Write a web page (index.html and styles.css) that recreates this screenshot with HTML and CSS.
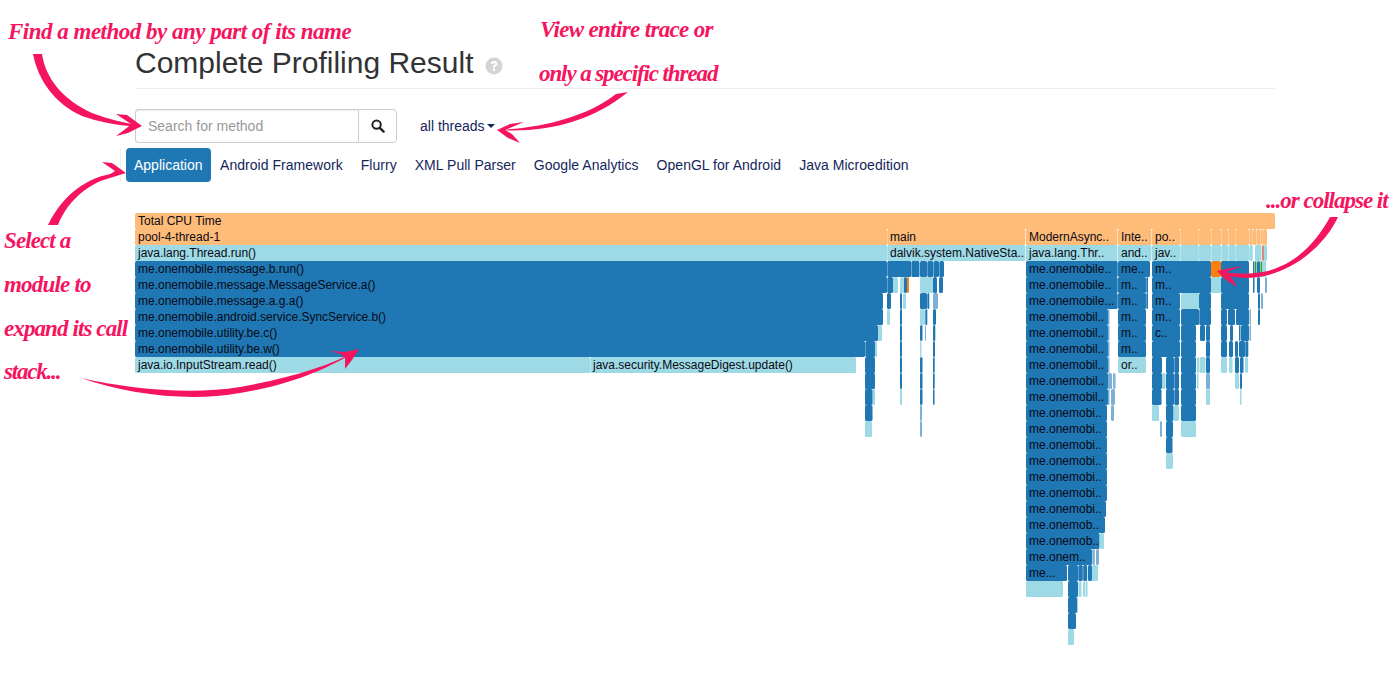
FILE: index.html
```html
<!DOCTYPE html>
<html lang="en">

<head>
    <meta charset="UTF-8">
    <title>Complete Profiling Result</title>
    <link rel="stylesheet" href="styles.css">
</head>

<body>
    <div class="page">
        <div class="page-header">
            <h1>Complete Profiling Result</h1>
            <svg class="help-icon" viewBox="0 0 18 18">
                <circle cx="9" cy="9" r="8.5" fill="#d4d4d4" />
                <path d="M5.8 6.8C6 4.9 7.4 4 9.2 4c1.9 0 3.3 1.1 3.3 2.8 0 1.3-.8 1.9-1.6 2.4-.7.4-.9.7-.9 1.3H7.9c0-1.3.4-1.9 1.3-2.4.7-.4 1-.7 1-1.2 0-.6-.5-1-1.1-1-.7 0-1.1.4-1.3 1.2z" fill="#fff" />
                <rect x="7.9" y="11.5" width="2.2" height="2.4" fill="#fff" />
            </svg>
        </div>

        <div class="toolbar">
            <div class="search-group">
                <input type="text" class="search-input" placeholder="Search for method">
                <button class="search-button" type="button">
                    <svg class="search-icon" viewBox="0 0 14 14">
                        <circle cx="5.6" cy="5.6" r="4.2" fill="none" stroke="#222" stroke-width="2" />
                        <path d="M8.8 8.8l3.8 3.8" stroke="#222" stroke-width="2.4" stroke-linecap="round" />
                    </svg>
                </button>
            </div>
            <a class="thread-select" href="#">all threads<span class="caret"></span></a>
        </div>

        <ul class="modules">
            <li class="active"><a href="#">Application</a></li>
            <li><a href="#">Android Framework</a></li>
            <li><a href="#">Flurry</a></li>
            <li><a href="#">XML Pull Parser</a></li>
            <li><a href="#">Google Analytics</a></li>
            <li><a href="#">OpenGL for Android</a></li>
            <li><a href="#">Java Microedition</a></li>
        </ul>

        <!-- viewBox uses page coordinates so the frames are easy to read off -->
        <svg class="flame" viewBox="135 213 1140 440">
            <g class="orange">
                <rect x="135" y="213" width="1140" />
                <rect x="135" y="229" width="752" />
                <rect x="887.3" y="229" width="138" />
                <rect x="1025.8" y="229" width="91.7" />
                <rect x="1118" y="229" width="33.5" />
                <rect x="1152" y="229" width="28" />
                <rect x="1180.3" y="229" width="18.5" />
                <rect x="1199" y="229" width="12" />
                <rect x="1211.3" y="229" width="9.7" />
                <rect x="1221.3" y="229" width="6.7" />
                <rect x="1228.3" y="229" width="7.5" />
                <rect x="1236" y="229" width="13" />
                <rect x="1249.3" y="229" width="3.5" />
                <rect x="1253" y="229" width="3.7" />
                <rect x="1257" y="229" width="3" />
                <rect x="1260.3" y="229" width="2.5" />
                <rect x="1263" y="229" width="4" />
            </g>
            <g class="light">
                <rect x="135" y="245" width="752" />
                <rect x="887.3" y="245" width="138" />
                <rect x="1025.8" y="245" width="91.7" />
                <rect x="1118" y="245" width="33.5" />
                <rect x="1152" y="245" width="28" />
                <rect x="1180.3" y="245" width="18.5" />
                <rect x="1199" y="245" width="12" />
                <rect x="1211.3" y="245" width="9.7" />
                <rect x="1221.3" y="245" width="6.7" />
                <rect x="1228.3" y="245" width="7.5" />
                <rect x="1236" y="245" width="13" />
                <rect x="1249.3" y="245" width="3.5" />
                <rect x="1255" y="245" width="6.5" />
                <rect x="1264" y="245" width="3" />
                <rect x="1262" y="261" width="4" />
                <rect x="893" y="277" width="5" />
                <rect x="900" y="277" width="4" />
                <rect x="920" y="277" width="13" />
                <rect x="1211" y="277" width="10" />
                <rect x="903" y="293" width="3" />
                <rect x="1181" y="293" width="18" />
                <rect x="887" y="309" width="3" />
                <rect x="920" y="309" width="5" />
                <rect x="878" y="325" width="4" />
                <rect x="875" y="341" width="2" />
                <rect x="135" y="357" width="455" />
                <rect x="590.3" y="357" width="265.7" />
                <rect x="1118" y="357" width="28" />
                <rect x="1197" y="357" width="2" />
                <rect x="1199.5" y="357" width="6" />
                <rect x="1221" y="357" width="6" />
                <rect x="1229" y="357" width="3.5" />
                <rect x="1245" y="357" width="3" />
                <rect x="920" y="341" width="1.5" />
                <rect x="1162" y="373" width="3.5" />
                <rect x="1197" y="373" width="1.5" />
                <rect x="1235" y="373" width="4" />
                <rect x="872.5" y="389" width="2.5" />
                <rect x="900" y="389" width="2" />
                <rect x="1206" y="389" width="4" />
                <rect x="1240" y="389" width="1.5" />
                <rect x="1152" y="405" width="7" />
                <rect x="1174" y="405" width="5" />
                <rect x="865" y="421" width="7" />
                <rect x="1181" y="421" width="15" />
                <rect x="1166" y="453" width="7" />
                <rect x="1100" y="533" width="4" />
                <rect x="1092" y="565" width="6" />
                <rect x="1026" y="581" width="37" />
                <rect x="1078.5" y="581" width="3" />
                <rect x="1083" y="581" width="2.5" />
                <rect x="1086" y="581" width="1.5" />
                <rect x="1077" y="597" width="1" />
                <rect x="1068" y="629" width="6" />
            </g>
            <g class="blue">
                <rect x="135" y="261" width="752" />
                <rect x="887.3" y="261" width="24" />
                <rect x="911.5" y="261" width="8" />
                <rect x="920" y="261" width="7" />
                <rect x="927.3" y="261" width="6" />
                <rect x="933.5" y="261" width="5.5" />
                <rect x="939.3" y="261" width="4.7" />
                <rect x="1026" y="261" width="91.7" />
                <rect x="1118" y="261" width="32" />
                <rect x="1152" y="261" width="59" />
                <rect x="1221" y="261" width="28" />
                <rect x="1253" y="261" width="1.5" />
                <rect x="1257" y="261" width="3" />

                <rect x="135" y="277" width="752" />
                <rect x="887.3" y="277" width="5.7" />
                <rect x="904" y="277" width="3" />
                <rect x="933" y="277" width="4" />
                <rect x="939" y="277" width="4" />
                <rect x="1026" y="277" width="91.7" />
                <rect x="1118" y="277" width="28" />
                <rect x="1146.3" y="277" width="1.7" />
                <rect x="1152" y="277" width="59" />
                <rect x="1221" y="277" width="28" />
                <rect x="1253" y="277" width="1.5" />
                <rect x="1257" y="277" width="3" />

                <rect x="135" y="293" width="748" />
                <rect x="887" y="293" width="4" />
                <rect x="900" y="293" width="2" />
                <rect x="920" y="293" width="7" />
                <rect x="927.3" y="293" width="2" />
                <rect x="1026" y="293" width="91.7" />
                <rect x="1118" y="293" width="28" />
                <rect x="1146.3" y="293" width="1.7" />
                <rect x="1152" y="293" width="28" />
                <rect x="1199" y="293" width="12" />
                <rect x="1221" y="293" width="28" />
                <rect x="1258" y="293" width="2" />

                <rect x="135" y="309" width="748" />
                <rect x="900" y="309" width="2" />
                <rect x="925.3" y="309" width="2" />
                <rect x="933" y="309" width="3" />
                <rect x="1026" y="309" width="82" />
                <rect x="1118" y="309" width="28" />
                <rect x="1152" y="309" width="28" />
                <rect x="1181" y="309" width="18" />
                <rect x="1199.3" y="309" width="11.7" />
                <rect x="1221" y="309" width="6" />
                <rect x="1228" y="309" width="7" />
                <rect x="1236" y="309" width="13" />
                <rect x="1258" y="309" width="2" />

                <rect x="135" y="325" width="743" />
                <rect x="900" y="325" width="2" />
                <rect x="920" y="325" width="2.5" />
                <rect x="933" y="325" width="2.3" />
                <rect x="1026" y="325" width="82" />
                <rect x="1118" y="325" width="28" />
                <rect x="1152" y="325" width="28" />
                <rect x="1181" y="325" width="15" />
                <rect x="1200" y="325" width="5" />
                <rect x="1206" y="325" width="4" />
                <rect x="1221" y="325" width="6" />
                <rect x="1230" y="325" width="3" />
                <rect x="1239" y="325" width="1.5" />
                <rect x="1241" y="325" width="8" />

                <rect x="135" y="341" width="730" />
                <rect x="865.3" y="341" width="9.7" />
                <rect x="900" y="341" width="2" />
                <rect x="933" y="341" width="2" />
                <rect x="1026" y="341" width="82" />
                <rect x="1118" y="341" width="28" />
                <rect x="1152" y="341" width="28" />
                <rect x="1181" y="341" width="15" />
                <rect x="1206" y="341" width="4" />
                <rect x="1221" y="341" width="6" />
                <rect x="1229" y="341" width="4" />
                <rect x="1235" y="341" width="3" />
                <rect x="1239" y="341" width="6" />
                <rect x="1245.3" y="341" width="3" />

                <rect x="865" y="357" width="10" />
                <rect x="900" y="357" width="2" />
                <rect x="920" y="357" width="2.5" />
                <rect x="933" y="357" width="1.7" />
                <rect x="1026" y="357" width="82" />
                <rect x="1152" y="357" width="10" />
                <rect x="1166" y="357" width="8" />
                <rect x="1174.3" y="357" width="4.7" />
                <rect x="1181" y="357" width="15" />
                <rect x="1206" y="357" width="4" />
                <rect x="1235" y="357" width="4" />
                <rect x="1240" y="357" width="3.5" />

                <rect x="865" y="373" width="10" />
                <rect x="900" y="373" width="2" />
                <rect x="920" y="373" width="2.5" />
                <rect x="933" y="373" width="1.7" />
                <rect x="1026" y="373" width="82" />
                <rect x="1152" y="373" width="10" />
                <rect x="1166" y="373" width="8" />
                <rect x="1174.3" y="373" width="4.7" />
                <rect x="1181" y="373" width="15" />
                <rect x="1240" y="373" width="2" />

                <rect x="865" y="389" width="7.5" />
                <rect x="920" y="389" width="2.5" />
                <rect x="933" y="389" width="1.5" />
                <rect x="1026" y="389" width="82" />
                <rect x="1152" y="389" width="9.5" />
                <rect x="1166" y="389" width="8" />
                <rect x="1174.3" y="389" width="4.7" />
                <rect x="1181" y="389" width="15" />

                <rect x="865" y="405" width="7.5" />
                <rect x="1026" y="405" width="81" />
                <rect x="1166" y="405" width="7.5" />
                <rect x="1181" y="405" width="15" />

                <rect x="1026" y="421" width="81" />
                <rect x="1166" y="421" width="7" />
                <rect x="1026" y="437" width="81" />
                <rect x="1166" y="437" width="6.5" />
                <rect x="1026" y="453" width="81" />
                <rect x="1026" y="469" width="81" />
                <rect x="1026" y="485" width="81" />
                <rect x="1026" y="501" width="80" />
                <rect x="1026" y="517" width="79" />
                <rect x="1026" y="533" width="73.5" />
                <rect x="1026" y="549" width="66" />

                <rect x="1026" y="565" width="41" />
                <rect x="1068" y="565" width="10" />
                <rect x="1078.3" y="565" width="4.5" />
                <rect x="1083.2" y="565" width="4" />
                <rect x="1088" y="565" width="4" />
                <rect x="1068" y="581" width="10" />
                <rect x="1068" y="597" width="9" />
                <rect x="1068" y="613" width="8" />
            </g>
            <g class="faded">
                <rect x="1265" y="277" width="2" />
                <rect x="1261" y="293" width="2" />
                <rect x="933" y="293" width="5" />
                <rect x="925" y="325" width="1" />
                <rect x="1108" y="309" width="1.5" />
                <rect x="1108" y="325" width="1.5" />
                <rect x="1108" y="341" width="1.5" />
                <rect x="1108" y="357" width="1.5" />
                <rect x="1108" y="373" width="4" />
                <rect x="1113" y="373" width="2.5" />
                <rect x="1108" y="389" width="1.5" />
                <rect x="1111" y="389" width="4" />
                <rect x="1111" y="405" width="3" />
                <rect x="920" y="405" width="2" />
                <rect x="920" y="421" width="2" />
                <rect x="1160" y="421" width="2" />
                <rect x="1206" y="373" width="4" />
                <rect x="1249.5" y="309" width="1.5" />
                <rect x="1249.5" y="325" width="1.5" />
                <rect x="1092.3" y="549" width="2.5" />
                <rect x="1096" y="549" width="3" />
            </g>
            <g class="hot">
                <rect x="1211" y="261" width="10" />
                <rect x="907" y="277" width="2" />
            </g>
            <g class="green">
                <rect x="1255" y="261" width="1.5" />
                <rect x="1260.5" y="261" width="1.5" />
            </g>
            <g class="red">
                <rect x="1262" y="245" width="2" />
            </g>
            <g class="labels">
                <text x="138" y="225">Total CPU Time</text>
                <text x="138" y="241">pool-4-thread-1</text>
                <text x="890" y="241">main</text>
                <text x="1029" y="241">ModernAsync..</text>
                <text x="1121" y="241">Inte..</text>
                <text x="1155" y="241">po..</text>
                <text x="138" y="257">java.lang.Thread.run()</text>
                <text x="890" y="257">dalvik.system.NativeSta..</text>
                <text x="1029" y="257">java.lang.Thr..</text>
                <text x="1121" y="257">and..</text>
                <text x="1155" y="257">jav..</text>
                <text x="138" y="273">me.onemobile.message.b.run()</text>
                <text x="1029" y="273">me.onemobile..</text>
                <text x="1121" y="273">me..</text>
                <text x="1155" y="273">m..</text>
                <text x="138" y="289">me.onemobile.message.MessageService.a()</text>
                <text x="1029" y="289">me.onemobile..</text>
                <text x="1121" y="289">m..</text>
                <text x="1155" y="289">m..</text>
                <text x="138" y="305">me.onemobile.message.a.g.a()</text>
                <text x="1029" y="305">me.onemobile...</text>
                <text x="1121" y="305">m..</text>
                <text x="1155" y="305">m..</text>
                <text x="138" y="321">me.onemobile.android.service.SyncService.b()</text>
                <text x="1029" y="321">me.onemobil..</text>
                <text x="1121" y="321">m..</text>
                <text x="1155" y="321">m..</text>
                <text x="138" y="337">me.onemobile.utility.be.c()</text>
                <text x="1029" y="337">me.onemobil..</text>
                <text x="1121" y="337">m..</text>
                <text x="1155" y="337">c..</text>
                <text x="138" y="353">me.onemobile.utility.be.w()</text>
                <text x="1029" y="353">me.onemobil..</text>
                <text x="1121" y="353">m..</text>
                <text x="138" y="369">java.io.InputStream.read()</text>
                <text x="593" y="369">java.security.MessageDigest.update()</text>
                <text x="1029" y="369">me.onemobil..</text>
                <text x="1121" y="369">or..</text>
                <text x="1029" y="385">me.onemobil..</text>
                <text x="1029" y="401">me.onemobil..</text>
                <text x="1029" y="417">me.onemobi..</text>
                <text x="1029" y="433">me.onemobi..</text>
                <text x="1029" y="449">me.onemobi..</text>
                <text x="1029" y="465">me.onemobi..</text>
                <text x="1029" y="481">me.onemobi..</text>
                <text x="1029" y="497">me.onemobi..</text>
                <text x="1029" y="513">me.onemobi..</text>
                <text x="1029" y="529">me.onemob..</text>
                <text x="1029" y="545">me.onemob..</text>
                <text x="1029" y="561">me.onem..</text>
                <text x="1029" y="577">me...</text>
            </g>
        </svg>
    </div>

    <!-- hand drawn callouts, these sit on top of the page -->
    <svg class="arrows" viewBox="0 0 1400 700">
        <path d="M33 54L42 54C46 80 64 100 92 113C108 119 125 123 142 126C120 127 100 122 82 116C55 104 38 80 33 54Z" />
        <path d="M116 114L127 115L142 126L128 133L116 136L128 127L131 124Z" />
        <path d="M628 92L616 94C585 118 540 128 498 130C545 133 592 122 628 92Z" />
        <path d="M524 122L510 124L497 130L508 138L520 143L512 134L505 130Z" />
        <path d="M48 225L58 225C68 200 90 180 125 173C95 172 65 190 48 225Z" />
        <path d="M102 162L112 163L126 173L110 178L97 182L112 173L115 171Z" />
        <path d="M81 378C130 395 190 402 240 393C290 385 330 368 358 350C330 366 290 378 240 387C190 395 130 389 81 378Z" />
        <path d="M330 351L345 352L359 349L352 360L345 369L345 358L341 354Z" />
        <path d="M1330 217L1338 217C1325 245 1290 278 1245 278C1235 278 1225 275 1217 271C1235 274 1245 274 1255 273C1290 270 1315 245 1330 217Z" />
        <path d="M1243 266L1230 268L1217 271L1226 280L1237 287L1232 278L1226 272Z" />
    </svg>

    <span class="note note-find">Find a method by any part of its name</span>
    <span class="note note-view">View entire trace or</span>
    <span class="note note-only">only a specific thread</span>
    <span class="note note-collapse">...or collapse it</span>
    <span class="note note-select">Select a</span>
    <span class="note note-module">module to</span>
    <span class="note note-expand">expand its call</span>
    <span class="note note-stack">stack...</span>
</body>

</html>
```

FILE: styles.css
```css
body {
    font-family: "Liberation Sans", Arial, sans-serif;
    font-size: 14px;
    color: #333;
    background-color: #fff;
    margin: 0;
}

a {
    color: #14265c;
    text-decoration: none;
}

.page {
    width: 1140px;
    margin-left: 135px;
    padding-top: 46px;
}

.page-header {
    display: flex;
    align-items: center;
    gap: 12px;
    padding-bottom: 9px;
    border-bottom: 1px solid #eee;
    margin-bottom: 20px;
}

.page-header h1 {
    font-size: 30px;
    font-weight: 400;
    line-height: 33px;
    margin: 0;
}

.help-icon {
    width: 18px;
    height: 18px;
    margin-top: 6px;
}

.toolbar {
    display: flex;
    align-items: center;
    gap: 23px;
    margin-bottom: 5px;
}

.search-group {
    display: flex;
    width: 262px;
    height: 34px;
}

.search-input {
    flex: 1;
    min-width: 0;
    padding: 6px 12px;
    border: 1px solid #ccc;
    border-right: none;
    border-radius: 4px 0 0 4px;
    box-sizing: border-box;
    font-family: inherit;
    font-size: 14px;
    box-shadow: inset 0 1px 1px rgba(0, 0, 0, 0.075);
}

.search-input::placeholder {
    color: #999;
}

.search-button {
    display: flex;
    align-items: center;
    justify-content: center;
    width: 39px;
    padding: 0;
    background-color: #fff;
    border: 1px solid #ccc;
    border-radius: 0 4px 4px 0;
}

.search-icon {
    width: 14px;
    height: 14px;
}

.thread-select {
    display: flex;
    align-items: center;
}

.caret {
    width: 0;
    height: 0;
    margin-left: 2px;
    border-top: 4px solid #14265c;
    border-left: 4px solid transparent;
    border-right: 4px solid transparent;
}

.modules {
    display: flex;
    gap: 2px;
    height: 34px;
    list-style: none;
    margin: 0 0 31px -15px;
    padding: 0 0 0 5px;
    border-left: 1px solid #eee;
    letter-spacing: 0.03px;
}

.modules a {
    display: block;
    padding: 7px 8px;
    line-height: 20px;
    border-radius: 4px;
}

.modules .active a {
    color: #fff;
    background-color: #1f77b4;
    letter-spacing: 0;
    margin-right: -0.4px;
}

.flame {
    display: block;
    width: 1140px;
    height: 440px;
}

.flame rect {
    height: 16px;
    rx: 1.5px;
}

.orange {
    fill: #ffbb78;
}

.light {
    fill: #9edae5;
}

.blue {
    fill: #1f77b4;
}

.faded {
    fill: #7cb0d6;
}

.hot {
    fill: #ff7f0e;
}

.green {
    fill: #2ca02c;
}

.red {
    fill: #d98880;
}

.labels {
    font-size: 12px;
    fill: #0a0a14;
}

.arrows {
    position: absolute;
    left: 0;
    top: 0;
    width: 1400px;
    height: 700px;
    fill: #f5155f;
    pointer-events: none;
}

.note {
    position: absolute;
    font-family: "Liberation Serif", serif;
    font-style: italic;
    font-weight: 700;
    font-size: 23px;
    line-height: 30px;
    color: #f5155f;
    white-space: nowrap;
}

.note-find {
    left: 8px;
    top: 17px;
    letter-spacing: -0.5px;
}

.note-view {
    left: 540px;
    top: 15px;
    letter-spacing: -0.65px;
}

.note-only {
    left: 539px;
    top: 59px;
    letter-spacing: -1.1px;
}

.note-collapse {
    left: 1266px;
    top: 186px;
    letter-spacing: -1px;
}

.note-select {
    left: 4px;
    top: 226px;
    letter-spacing: -0.9px;
}

.note-module {
    left: 4px;
    top: 270px;
    letter-spacing: -0.8px;
}

.note-expand {
    left: 4px;
    top: 314px;
    letter-spacing: -0.9px;
}

.note-stack {
    left: 4px;
    top: 357px;
    letter-spacing: -1.2px;
}
```
